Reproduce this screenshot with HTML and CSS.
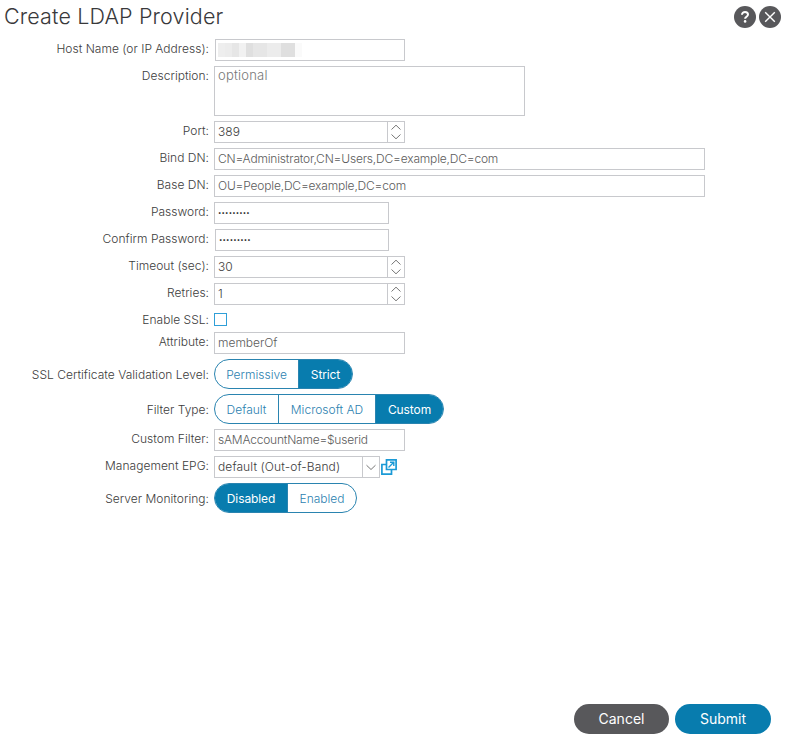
FILE: index.html
```html
<!DOCTYPE html>
<html lang="en">
<head>
<meta charset="utf-8">
<title>Create LDAP Provider</title>
<link rel="stylesheet" href="styles.css">
</head>
<body>
<main class="dialog">
  <header class="header">
    <h1 class="title">Create LDAP Provider</h1>
    <div class="tools">
      <svg class="tool" viewBox="0 0 22 22"><circle cx="11" cy="11" r="11" fill="#58585b"/><path d="M8 8.700C8 6.900 9.300 6 11 6s3 1 3 2.600c0 2.200-2.900 2.200-2.900 4.200" fill="none" stroke="#fff" stroke-width="2"/><circle cx="11.100" cy="15.400" r="1.300" fill="#fff"/></svg>
      <svg class="tool" viewBox="0 0 22 22"><circle cx="11" cy="11" r="11" fill="#58585b"/><path d="M6.200 6.200l9.600 9.600M15.800 6.200l-9.600 9.600" stroke="#fff" stroke-width="1.400"/></svg>
    </div>
  </header>

  <form class="form">
    <div class="row"><span class="label">Host Name (or IP Address):</span>
      <div class="field inset"><span class="mosaic"><i class="m1"></i><i class="m2"></i><i class="m3"></i><i class="m4"></i><i class="m5"></i><i class="m3"></i><i class="m3"></i><i class="m2"></i><i class="m2"></i><i class="m5"></i><i class="m5"></i><i class="m8"></i></span></div></div>
    <div class="row"><span class="label">Description:</span><div class="field area">optional</div></div>
    <div class="row"><span class="label">Port:</span><div class="field dark">389<span class="spin"><svg viewBox="0 0 16 20"><path d="M3.500 7.500L8 3.200l4.500 4.300M3.500 12.500L8 16.800l4.500-4.300"/></svg></span></div></div>
    <div class="row"><span class="label">Bind DN:</span><div class="field wide">CN=Administrator,CN=Users,DC=example,DC=com</div></div>
    <div class="row"><span class="label">Base DN:</span><div class="field wide">OU=People,DC=example,DC=com</div></div>
    <div class="row"><span class="label">Password:</span><div class="field pass"><span class="dots">•••••••••</span></div></div>
    <div class="row"><span class="label">Confirm Password:</span><div class="field pass inset"><span class="dots">•••••••••</span></div></div>
    <div class="row"><span class="label">Timeout (sec):</span><div class="field dark">30<span class="spin"><svg viewBox="0 0 16 20"><path d="M3.500 7.500L8 3.200l4.500 4.300M3.500 12.500L8 16.800l4.500-4.300"/></svg></span></div></div>
    <div class="row"><span class="label">Retries:</span><div class="field dark">1<span class="spin"><svg viewBox="0 0 16 20"><path d="M3.500 7.500L8 3.200l4.500 4.300M3.500 12.500L8 16.800l4.500-4.300"/></svg></span></div></div>
    <div class="row check-row"><span class="label">Enable SSL:</span><span class="check"></span></div>
    <div class="row"><span class="label">Attribute:</span><div class="field">memberOf</div></div>
    <div class="row seg-row"><span class="label">SSL Certificate Validation Level:</span><div class="segments validation"><span>Permissive</span><span class="on">Strict</span></div></div>
    <div class="row seg-row"><span class="label">Filter Type:</span><div class="segments filter"><span>Default</span><span>Microsoft AD</span><span class="on">Custom</span></div></div>
    <div class="row"><span class="label">Custom Filter:</span><div class="field tight">sAMAccountName=$userid</div></div>
    <div class="row"><span class="label">Management EPG:</span><div class="field select dark">default (Out-of-Band)<span class="spin"><svg viewBox="0 0 16 20"><path d="M3.500 8.200L8 12.500l4.500-4.300"/></svg></span></div>
      <svg class="open" viewBox="0 0 16 16"><path d="M5.500.9h9.600v9.600H5.500zM5.500 5.500H.9v9.600h9.600v-4.600" fill="none" stroke="#1b9ad6" stroke-width="1.700"/><path d="M7.500 8.500l5-5M9 3.200h3.800V7" fill="none" stroke="#1b9ad6" stroke-width="1.400"/></svg></div>
    <div class="row seg-row"><span class="label">Server Monitoring:</span><div class="segments monitoring"><span class="on">Disabled</span><span>Enabled</span></div></div>
  </form>

  <footer class="footer">
    <button class="button cancel">Cancel</button>
    <button class="button submit">Submit</button>
  </footer>
</main>
</body>
</html>
```
FILE: styles.css
```css
* { box-sizing: border-box; }
body { margin: 0; background: #fff; font-family: Inter, "Liberation Sans", sans-serif; font-size: 12px; font-weight: 300; color: #444; }
.dialog { width: 786px; height: 739px; display: flex; flex-direction: column; }
.header { height: 39px; display: flex; justify-content: space-between; padding: 0 5px 0 4px; }
.title { margin: 0; font-size: 21.5px; line-height: 33px; font-weight: 300; letter-spacing: .14px; color: #39393b; }
.tools { display: flex; gap: 3px; padding-top: 6px; }
.tool { width: 22px; height: 22px; }
.form { flex: 1; display: flex; flex-direction: column; gap: 5px; }
.row { display: flex; align-items: flex-start; height: 22px; }
.row:has(.area) { height: 50px; }
.label { width: 209px; margin-right: 5px; text-align: right; line-height: 20px; color: #3c3c3c; letter-spacing: .02px; white-space: nowrap; }
.field { width: 191px; height: 22px; border: 1px solid #c8c9cd; padding: 0 0 0 3px; display: flex; justify-content: space-between; line-height: 19px; color: #5c5c5c; letter-spacing: -.02px; white-space: nowrap; }
.dark { color: #3c3c3c; letter-spacing: .1px; }
.inset { margin-left: 1px; width: 190px; }
.area { width: 311px; height: 50px; font-size: 13px; line-height: 17px; color: #777; letter-spacing: .22px; }
.wide { width: 491px; letter-spacing: -.18px; }
.tight { letter-spacing: -.22px; }
.pass { width: 175px; }
.pass.inset { width: 174px; }
.dots { font-size: 6px; letter-spacing: .17px; color: #111; font-weight: 400; }
.spin { width: 17px; border-left: 1px solid #c8c9cd; }
.spin svg { display: block; width: 16px; height: 20px; fill: none; stroke: #777; stroke-width: 1; }
.mosaic { display: flex; height: 14px; margin: 3px 0 0 -1px; }
.mosaic i { width: 7px; }
.m1 { background: #eee; }
.m2 { background: #ececec; }
.m3 { background: #e6e6e6; }
.m4 { background: #f1f1f1; }
.m5 { background: #dfdfdf; }
.m8 { background: #fafafa; }
.check-row { height: 17px; }
.check { width: 13px; height: 13px; margin-top: 3px; border: 1px solid #2f9fd8; }
.seg-row { height: 30px; }
.seg-row .label { line-height: 32px; }
.segments { display: grid; height: 30px; border: 1px solid #2a84b0; border-radius: 15px; overflow: hidden; line-height: 30px; color: #2c7fb0; text-align: center; letter-spacing: 0; }
.segments span + span { border-left: 1px solid #2a84b0; }
.segments .on { background: #087cae; color: #fff; font-weight: 400; letter-spacing: -.1px; }
.validation { grid-template-columns: 83px 54px; }
.filter { grid-template-columns: 63px 97px 68px; }
.monitoring { grid-template-columns: 72px 69px; }
.select { width: 166px; }
.open { width: 16px; height: 16px; margin: 3px 0 0 1px; }
.footer { display: flex; justify-content: flex-end; gap: 6px; padding: 0 15px 5px 0; }
.button { width: 95px; height: 30px; border: 0; border-radius: 15px; padding: 0; font: 400 14px/30px Inter, sans-serif; color: #fff; }
.cancel { background: #58585b; }
.submit { width: 96px; background: #087cae; }
```
